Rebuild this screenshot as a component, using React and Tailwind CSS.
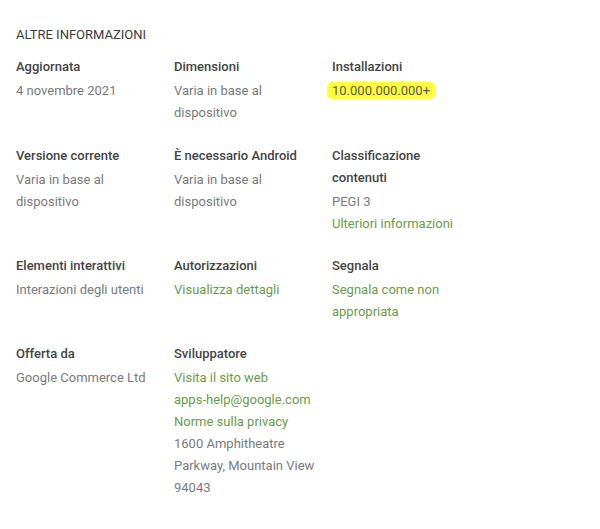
import React from 'react';

const rows = [
    [
        { title: 'Aggiornata', lines: [{ t: '4 novembre 2021' }] },
        { title: 'Dimensioni', lines: [{ t: 'Varia in base al dispositivo' }] },
        { title: 'Installazioni', lines: [{ t: '10.000.000.000+', mark: true }] },
    ],
    [
        { title: 'Versione corrente', lines: [{ t: 'Varia in base al dispositivo' }] },
        { title: 'È necessario Android', lines: [{ t: 'Varia in base al dispositivo' }] },
        { title: 'Classificazione contenuti', lines: [{ t: 'PEGI 3' }, { t: 'Ulteriori informazioni', link: true }] },
    ],
    [
        { title: 'Elementi interattivi', lines: [{ t: 'Interazioni degli utenti' }] },
        { title: 'Autorizzazioni', lines: [{ t: 'Visualizza dettagli', link: true }] },
        { title: 'Segnala', lines: [{ t: 'Segnala come non appropriata', link: true }] },
    ],
    [
        { title: 'Offerta da', lines: [{ t: 'Google Commerce Ltd' }] },
        {
            title: 'Sviluppatore',
            lines: [
                { t: 'Visita il sito web', link: true },
                { t: 'apps-help@google.com', link: true },
                { t: 'Norme sulla privacy', link: true },
                { t: '1600 Amphitheatre Parkway, Mountain View 94043' },
            ],
        },
        null,
    ],
];

function Line({ line }) {
    if (line.mark) {
        return (
            <div>
                <span className="-ml-[5px] px-[5px] py-[1px] bg-[#ffff3a] rounded-[5px] text-[#5a5a5a]">{line.t}</span>
            </div>
        );
    }
    return <div className={line.link ? 'text-[#6b9a4c]' : 'text-[#7a7a7a]'}>{line.t}</div>;
}

export default function App() {
    return (
        <div className="bg-white w-[600px] h-[529px] pl-4 pt-[25px] font-['Roboto','Liberation_Sans',sans-serif] text-[13px]">
            <h2 className="text-[13px] leading-5 text-[#3c3c3c] uppercase mb-[11px]">Altre informazioni</h2>
            <div className="flex flex-col gap-5">
                {rows.map((row, i) => (
                    <div key={i} className={`grid grid-cols-[158px_158px_158px] ${i === 1 ? 'pt-px' : ''}`}>
                        {row.map((cell, j) => (
                            <div key={j} className="pr-4 leading-[22px]">
                                {cell && (
                                    <>
                                        <div className="font-medium text-[#444] mb-[2px]">{cell.title}</div>
                                        {cell.lines.map((l, k) => <Line key={k} line={l} />)}
                                    </>
                                )}
                            </div>
                        ))}
                    </div>
                ))}
            </div>
        </div>
    );
}
